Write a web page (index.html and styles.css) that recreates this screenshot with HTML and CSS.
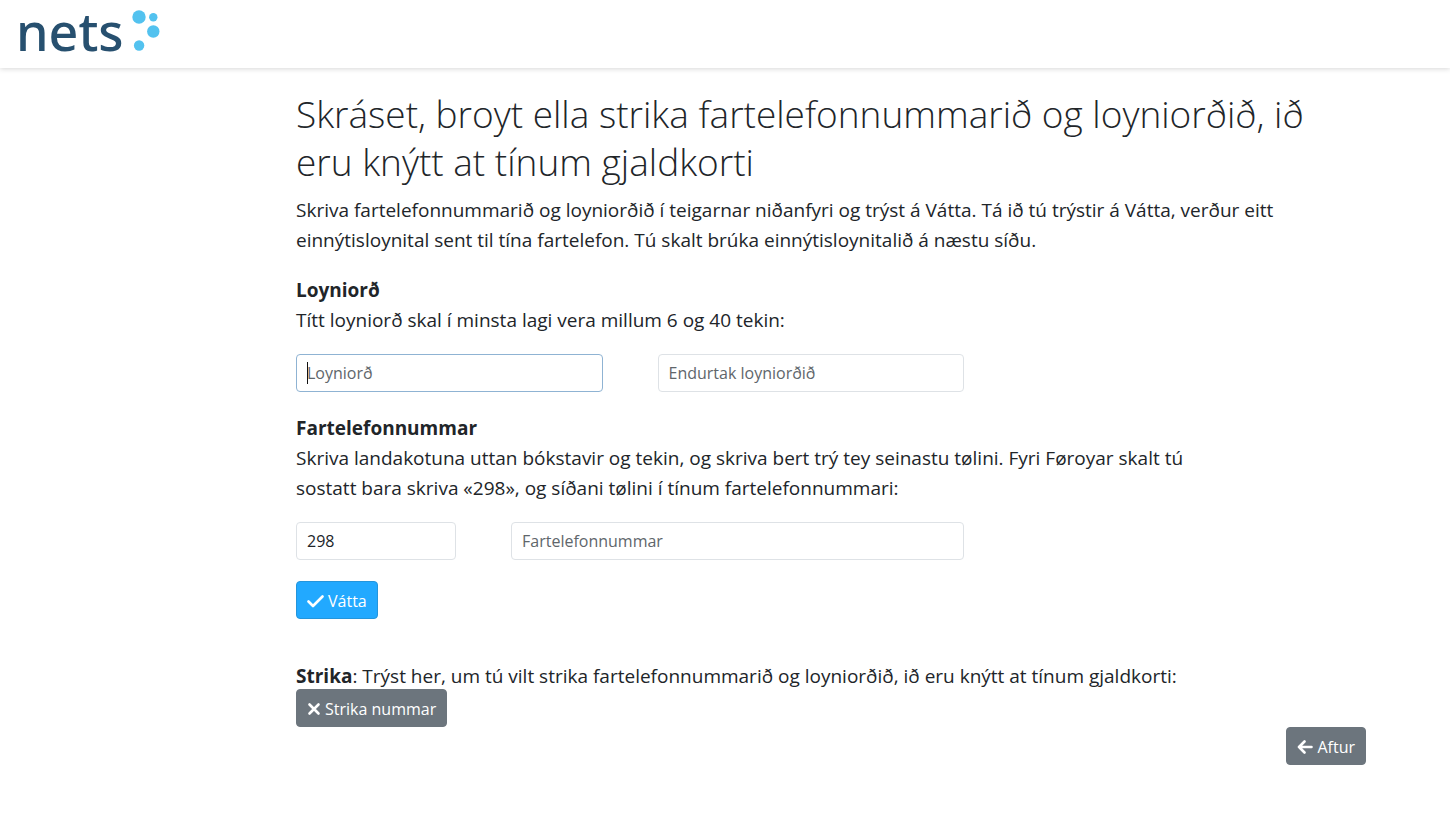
FILE: index.html
```html
<!DOCTYPE html>
<html lang="fo">
<head>
<meta charset="utf-8">
<meta name="viewport" content="width=device-width, initial-scale=1">
<title>Nets</title>
<link rel="stylesheet" href="styles.css">
</head>
<body>
<header class="topbar">
  <a class="logo" href="#"><span class="logo-word">nets</span><svg class="logo-dots" width="28" height="42" viewBox="0 0 28 42" aria-hidden="true"><circle cx="7" cy="7" r="6.7"/><circle cx="21.3" cy="7.2" r="4.2"/><circle cx="21.3" cy="21.5" r="6.2"/><circle cx="7.1" cy="35.5" r="5.2"/></svg></a>
</header>
<main class="page">
  <h1 class="title">Skráset, broyt ella strika fartelefonnummarið og loyniorðið, ið eru knýtt at tínum gjaldkorti</h1>
  <p class="text intro">Skriva fartelefonnummarið og loyniorðið í teigarnar niðanfyri og trýst á Vátta. Tá ið tú trýstir á Vátta, verður eitt einnýtisloynital sent til tína fartelefon. Tú skalt brúka einnýtisloynitalið á næstu síðu.</p>
  <form class="form">
    <section class="group">
      <h2 class="text strong">Loyniorð</h2>
      <p class="text">Títt loyniorð skal í minsta lagi vera millum 6 og 40 tekin:</p>
      <div class="fields even">
        <input class="field active" type="password" placeholder="Loyniorð" aria-label="Loyniorð">
        <input class="field" type="password" placeholder="Endurtak loyniorðið" aria-label="Endurtak loyniorðið">
      </div>
    </section>
    <section class="group">
      <h2 class="text strong">Fartelefonnummar</h2>
      <p class="text">Skriva landakotuna uttan bókstavir og tekin, og skriva bert trý tey seinastu tølini. Fyri Føroyar skalt tú sostatt bara skriva «298», og síðani tølini í tínum fartelefonnummari:</p>
      <div class="fields phone">
        <input class="field" type="text" value="298" aria-label="Landakota">
        <input class="field" type="tel" placeholder="Fartelefonnummar" aria-label="Fartelefonnummar">
      </div>
    </section>
    <button class="btn primary" type="submit"><svg width="17" height="14" viewBox="0 0 17 14" aria-hidden="true"><path d="M1.5 7.5 6 12 15.5 2.5"/></svg>Vátta</button>
  </form>
  <section class="remove">
    <p class="text"><b>Strika</b>: Trýst her, um tú vilt strika fartelefonnummarið og loyniorðið, ið eru knýtt at tínum gjaldkorti:</p>
    <button class="btn" type="button"><svg width="14" height="14" viewBox="0 0 14 14" aria-hidden="true"><path d="M2.5 2.5 11.5 11.5M11.5 2.5 2.5 11.5"/></svg>Strika nummar</button>
  </section>
  <div class="footer">
    <button class="btn" type="button"><svg width="16" height="14" viewBox="0 0 16 14" aria-hidden="true"><path d="M7.5 1.5 2 7 7.5 12.5M2 7H14.5"/></svg>Aftur</button>
  </div>
</main>
</body>
</html>
```
FILE: styles.css
```css
* { box-sizing: border-box; }
body {
  margin: 0;
  background: #fff;
  color: #212529;
  font-family: "Open Sans", "Noto Sans", sans-serif;
}
.topbar {
  display: flex;
  height: 68px;
  padding: 0 16px;
  box-shadow: 0 1px 5px rgba(0, 0, 0, 0.16);
}
.logo {
  display: flex;
  gap: 8px;
  align-items: center;
  height: 62px;
  color: #27506f;
  text-decoration: none;
}
.logo-word {
  font-family: "Noto Sans", sans-serif;
  font-size: 52px;
  font-weight: 500;
  line-height: 62px;
}
.logo-dots { fill: #53c2ef; }
.page { padding: 22px 84px 48px 296px; }
.title {
  margin: 0 0 9px;
  font-size: 37px;
  font-weight: 300;
  line-height: 48px;
}
.text {
  margin: 0;
  font-size: 19px;
  font-weight: 400;
  line-height: 30px;
}
.strong { font-weight: 700; }
.intro { margin-bottom: 20px; }
.form, .remove { max-width: 920px; }
.group { margin-bottom: 21px; }
.fields {
  display: grid;
  max-width: 668px;
  margin-top: 19px;
  column-gap: 55px;
}
.even { grid-template-columns: 1fr 1fr; }
.phone { grid-template-columns: 160px 1fr; }
.field {
  width: 100%;
  height: 38px;
  padding: 0 10px;
  border: 1px solid #dee2e6;
  border-radius: 4px;
  background: #fff;
  color: #212529;
  font-family: inherit;
  font-size: 16px;
}
.field::placeholder { color: #60666b; opacity: 1; }
.active {
  border-color: #8fb3d3;
  background: linear-gradient(#111, #111) 10px center / 1px 22px no-repeat;
}
.btn {
  display: inline-flex;
  align-items: center;
  gap: 4px;
  height: 38px;
  padding: 2px 10px 0;
  border: 1px solid #6c757d;
  border-radius: 4px;
  background: #6c757d;
  color: #fff;
  font-family: inherit;
  font-size: 16px;
}
.btn svg {
  fill: none;
  stroke: #fff;
  stroke-width: 2.6;
  stroke-linecap: round;
  stroke-linejoin: round;
}
.primary { border-color: #2495dc; background: #22a9ff; }
.remove { margin-top: 42px; }
.remove .btn { margin-top: -2px; }
.footer { display: flex; justify-content: flex-end; }
```
